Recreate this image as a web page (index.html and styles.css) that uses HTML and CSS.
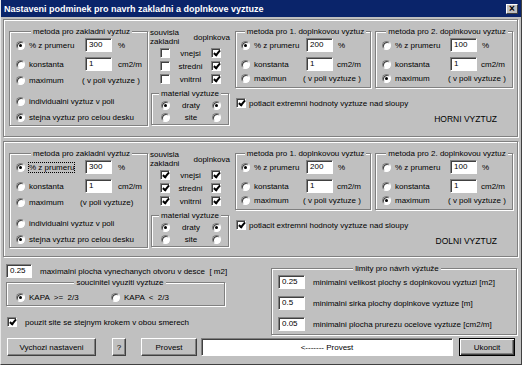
FILE: index.html
```html
<!DOCTYPE html>
<html lang="cs">
<head>
  <meta charset="UTF-8">
  <title>Nastaveni podminek</title>
  <link rel="stylesheet" href="styles.css">
</head>
<body>
<div class="dlg">
  <div class="title"><span>Nastaveni podminek pro navrh zakladni a doplnkove vyztuze</span><span class="close">×</span></div>

  <!-- horni vyztuz -->
  <div class="sect">
    <div class="grp g-base">
      <div class="lg">metoda pro zakladni vyztuz</div>
      <div class="row"><span class="opt w69"><i class="rad on"></i>% z prumeru</span><span class="edit">300</span><span class="unit">%</span></div>
      <div class="row mt5"><span class="opt w69"><i class="rad"></i>konstanta</span><span class="edit">1</span><span class="unit">cm2/m</span></div>
      <div class="row"><span class="opt w66"><i class="rad"></i>maximum</span><span>( v poli vyztuze )</span></div>
      <div class="row mt7"><span class="opt"><i class="rad"></i>individualni vyztuz v poli</span></div>
      <div class="row"><span class="opt"><i class="rad on"></i>stejna vyztuz pro celou desku</span></div>
    </div>
    <div class="mid">
      <div class="mid-head"><div>souvisla<br>zakladni</div><div>doplnkova</div></div>
      <div class="crow first"><i class="chk"></i><span>vnejsi</span><i class="chk on"></i></div>
      <div class="crow"><i class="chk"></i><span>stredni</span><i class="chk on"></i></div>
      <div class="crow"><i class="chk"></i><span>vnitrni</span><i class="chk on"></i></div>
      <div class="grp g-mat">
        <div class="lg">material vyztuze</div>
        <div class="mrow"><i class="rad on"></i><span>draty</span><i class="rad on"></i></div>
        <div class="mrow"><i class="rad"></i><span>site</span><i class="rad"></i></div>
      </div>
    </div>
    <div class="right">
      <div class="dops">
        <div class="grp g-d1">
          <div class="lg">metoda pro 1. doplnkovou vyztuz</div>
          <div class="row"><span class="opt w65"><i class="rad on"></i>% z prumeru</span><span class="edit">200</span><span class="unit u5">%</span></div>
          <div class="row mt5"><span class="opt w65"><i class="rad"></i>konstanta</span><span class="edit">1</span><span class="unit u4">cm2/m</span></div>
          <div class="row mt0"><span class="opt w62"><i class="rad"></i>maximun</span><span>( v poli vyztuze )</span></div>
        </div>
        <div class="grp g-d2">
          <div class="lg">metoda pro 2. doplnkovou vyztuz</div>
          <div class="row"><span class="opt w68"><i class="rad"></i>% z prumeru</span><span class="edit">100</span><span class="unit u5">%</span></div>
          <div class="row mt5"><span class="opt w68"><i class="rad"></i>konstanta</span><span class="edit">1</span><span class="unit u4">cm2/m</span></div>
          <div class="row mt0"><span class="opt w66"><i class="rad on"></i>maximum</span><span>( v poli vyztuze )</span></div>
        </div>
      </div>
      <div class="chkline"><i class="chk on"></i>potlacit extremni hodnoty vyztuze nad sloupy</div>
      <div class="caption">HORNI VYZTUZ</div>
    </div>
  </div>

  <!-- dolni vyztuz -->
  <div class="sect sect2">
    <div class="grp g-base">
      <div class="lg">metoda pro zakladni vyztuz</div>
      <div class="row"><span class="opt w69"><i class="rad on"></i><span class="focus">% z prumeru</span></span><span class="edit">300</span><span class="unit">%</span></div>
      <div class="row mt5"><span class="opt w69"><i class="rad"></i>konstanta</span><span class="edit">1</span><span class="unit">cm2/m</span></div>
      <div class="row"><span class="opt w64"><i class="rad"></i>maximum</span><span>(v poli vyztuze)</span></div>
      <div class="row mt7"><span class="opt"><i class="rad"></i>individualni vyztuz v poli</span></div>
      <div class="row"><span class="opt"><i class="rad on"></i>stejna vyztuz pro celou desku</span></div>
    </div>
    <div class="mid">
      <div class="mid-head"><div>souvisla<br>zakladni</div><div>doplnkova</div></div>
      <div class="crow first"><i class="chk on"></i><span>vnejsi</span><i class="chk on"></i></div>
      <div class="crow"><i class="chk on"></i><span>stredni</span><i class="chk on"></i></div>
      <div class="crow"><i class="chk on"></i><span>vnitrni</span><i class="chk on"></i></div>
      <div class="grp g-mat">
        <div class="lg">material vyztuze</div>
        <div class="mrow"><i class="rad on"></i><span>draty</span><i class="rad on"></i></div>
        <div class="mrow"><i class="rad"></i><span>site</span><i class="rad"></i></div>
      </div>
    </div>
    <div class="right">
      <div class="dops">
        <div class="grp g-d1">
          <div class="lg">metoda pro 1. doplnkovou vyztuz</div>
          <div class="row"><span class="opt w65"><i class="rad on"></i>% z prumeru</span><span class="edit">200</span><span class="unit u5">%</span></div>
          <div class="row mt5"><span class="opt w65"><i class="rad"></i>konstanta</span><span class="edit">1</span><span class="unit u4">cm2/m</span></div>
          <div class="row mt0"><span class="opt w62"><i class="rad"></i>maximum</span><span>( v poli vyztuze )</span></div>
        </div>
        <div class="grp g-d2">
          <div class="lg">metoda pro 2. doplnkovou vyztuz</div>
          <div class="row"><span class="opt w68"><i class="rad"></i>% z prumeru</span><span class="edit">100</span><span class="unit u5">%</span></div>
          <div class="row mt5"><span class="opt w68"><i class="rad"></i>konstanta</span><span class="edit">1</span><span class="unit u4">cm2/m</span></div>
          <div class="row mt0"><span class="opt w66"><i class="rad on"></i>maximum</span><span>( v poli vyztuze )</span></div>
        </div>
      </div>
      <div class="chkline"><i class="chk on"></i>potlacit extremni hodnoty vyztuze nad sloupy</div>
      <div class="caption">DOLNI VYZTUZ</div>
    </div>
  </div>

  <div class="lower">
    <div class="lleft">
      <div class="lrow"><span class="edit w26">0.25</span><span class="ml8">maximalni plocha vynechanych otvoru v desce&nbsp; [ m2]</span></div>
      <div class="grp g-kapa">
        <div class="lg">soucinitel vyuziti vyztuze</div>
        <div class="krow"><span class="opt w95"><i class="rad on"></i>KAPA &nbsp;&gt;= &nbsp;2/3</span><span class="opt"><i class="rad"></i>KAPA &nbsp;&lt; &nbsp;2/3</span></div>
      </div>
      <div class="lchk"><i class="chk on"></i>pouzit site se stejnym krokem v obou smerech</div>
    </div>
    <div class="grp g-lim">
      <div class="lg">limity pro návrh výztuže</div>
      <div class="row"><span class="edit">0.25</span><span class="ml8">minimalni velikost plochy s doplnkovou vyztuzi [m2]</span></div>
      <div class="row mt7"><span class="edit">0.5</span><span class="ml8">minimalni sirka plochy doplnkove vyztuze [m]</span></div>
      <div class="row mt7"><span class="edit">0.05</span><span class="ml8">minimalni plocha prurezu ocelove vyztuze [cm2/m]</span></div>
    </div>
  </div>

  <div class="btns">
    <span class="btn b-def">Vychozi nastaveni</span>
    <span class="btn b-help">?</span>
    <span class="btn b-run">Provest</span>
    <span class="field">&lt;------- Provest</span>
    <span class="btn b-end">Ukoncit</span>
  </div>
</div>
</body>
</html>
```

FILE: styles.css
```css
* { box-sizing: border-box; }
body { margin: 0; font-family: "Liberation Sans", Arial, sans-serif; font-size: 8px; color: #000; background: #c0c0c0; }

.dlg { width: 522px; height: 365px; background: #c0c0c0; border: 1px solid; border-color: #e8e8e8 #404040 #404040 #e8e8e8; border-top: 0; }
.title { height: 17px; background: #0a246a; color: #fff; font-weight: bold; font-size: 9px; display: flex; align-items: center; justify-content: space-between; padding: 0 3px 0 3px; white-space: nowrap; }
.close { width: 12px; height: 10px; background: #c0c0c0; color: #000; font-size: 10px; line-height: 8px; text-align: center; border: 1px solid; border-color: #fff #404040 #404040 #fff; }

/* panely */
.sect { margin: 2px 0 0 2px; width: 515px; height: 118px; border: 1px solid #808080; box-shadow: inset 1px 1px #fff, 1px 1px #fff; display: flex; align-items: flex-start; padding: 7px 0 0 5px; }
.sect2 { margin-top: 4px; height: 116px; }

.grp { border: 1px solid #808080; box-shadow: inset 1px 1px #fff, 1px 1px #fff; }
.lg { width: fit-content; margin: -5px auto 0; padding: 0 2px; background: #c0c0c0; height: 9px; line-height: 9px; white-space: nowrap; }

.row { display: flex; align-items: center; height: 14px; margin-top: 2px; white-space: nowrap; }
.mt0 { margin-top: 0; }
.mt5 { margin-top: 5px; }
.mt7 { margin-top: 7px; }
.ml8 { margin-left: 8px; }

.opt { display: flex; align-items: center; gap: 4px; white-space: nowrap; flex: none; }
.w62 { width: 62px; }
.w64 { width: 64px; }
.w65 { width: 65px; }
.w66 { width: 66px; }
.w68 { width: 68px; }
.w69 { width: 69px; }
.w95 { width: 95px; }

.rad { width: 9px; height: 9px; border-radius: 50%; background: #fff; border: 1px solid; border-color: #808080 #fff #fff #808080; box-shadow: inset 1px 1px #404040; display: inline-flex; align-items: center; justify-content: center; flex: none; }
.rad.on::after { content: ""; width: 3px; height: 3px; border-radius: 50%; background: #000; }

.chk { width: 10px; height: 10px; background: #fff; border: 1px solid; border-color: #808080 #fff #fff #808080; box-shadow: inset 1px 1px #404040; display: inline-flex; align-items: center; justify-content: center; flex: none; }
.chk.on::after { content: ""; width: 2px; height: 5px; border: solid #000; border-width: 0 2px 2px 0; transform: rotate(40deg); margin: -2px 0 0 1px; }

.edit { width: 27px; height: 14px; background: #fff; border: 1px solid; border-color: #808080 #fff #fff #808080; box-shadow: inset 1px 1px #404040; padding-left: 3px; line-height: 12px; flex: none; }
.w26 { width: 26px; }
.unit { margin-left: 6px; }
.u5 { margin-left: 5px; }
.u4 { margin-left: 4px; }
.focus { outline: 1px dotted #000; outline-offset: 0; }

/* zakladni vyztuz */
.g-base { width: 139px; height: 95px; margin-top: 4px; padding-left: 6px; }

/* souvisla / doplnkova */
.mid { width: 80px; margin-left: 2px; }
.mid-head { display: flex; justify-content: space-between; align-items: center; line-height: 9px; margin-top: 1px; }
.crow { display: flex; align-items: center; height: 10px; margin-top: 3px; padding: 0 9px 0 10px; }
.crow.first { margin-top: 2px; }
.crow span { flex: 1; text-align: center; }
.g-mat { width: 78px; height: 32px; margin: 9px 0 0 1px; }
.mrow { display: flex; align-items: center; height: 9px; margin-top: 3px; padding: 0 7px 0 9px; }
.mrow span { flex: 1; text-align: center; }

/* doplnkova vyztuz */
.right { width: 281px; margin-left: 5px; }
.dops { display: flex; gap: 4px; margin-top: 4px; }
.g-d1 { width: 136px; height: 57px; padding-left: 5px; }
.g-d2 { width: 138px; height: 57px; padding-left: 6px; }
.chkline { display: flex; align-items: center; gap: 3px; height: 10px; margin: 10px 0 0 1px; white-space: nowrap; }
.caption { text-align: right; padding-right: 19px; margin-top: 7px; line-height: 9px; font-size: 8.5px; }

/* spodni cast */
.lower { display: flex; height: 81px; padding-left: 5px; }
.lleft { width: 222px; }
.lrow { display: flex; align-items: center; height: 14px; margin-top: 7px; white-space: nowrap; }
.g-kapa { width: 219px; height: 24px; margin-top: 4px; padding-left: 9px; }
.krow { display: flex; align-items: center; height: 9px; margin-top: 6px; }
.lchk { display: flex; align-items: center; gap: 8px; height: 10px; margin: 11px 0 0 1px; white-space: nowrap; }
.g-lim { width: 246px; height: 67px; margin: 11px 0 0 43px; padding-left: 6px; }

.btns { display: flex; height: 18px; padding-left: 6px; }
.btn { height: 18px; display: flex; align-items: center; justify-content: center; border: 1px solid; border-color: #fff #404040 #404040 #fff; box-shadow: inset -1px -1px #808080; white-space: nowrap; }
.b-def { width: 89px; }
.b-help { width: 14px; margin-left: 16px; }
.b-run { width: 56px; margin-left: 15px; }
.field { width: 252px; margin-left: 4px; background: #fff; display: flex; align-items: center; justify-content: center; border: 1px solid; border-color: #808080 #fff #fff #808080; box-shadow: inset 1px 1px #404040; }
.b-end { width: 56px; margin-left: 6px; border-color: #000; box-shadow: inset 1px 1px #fff, inset -1px -1px #404040, inset -2px -2px #808080; }
```
